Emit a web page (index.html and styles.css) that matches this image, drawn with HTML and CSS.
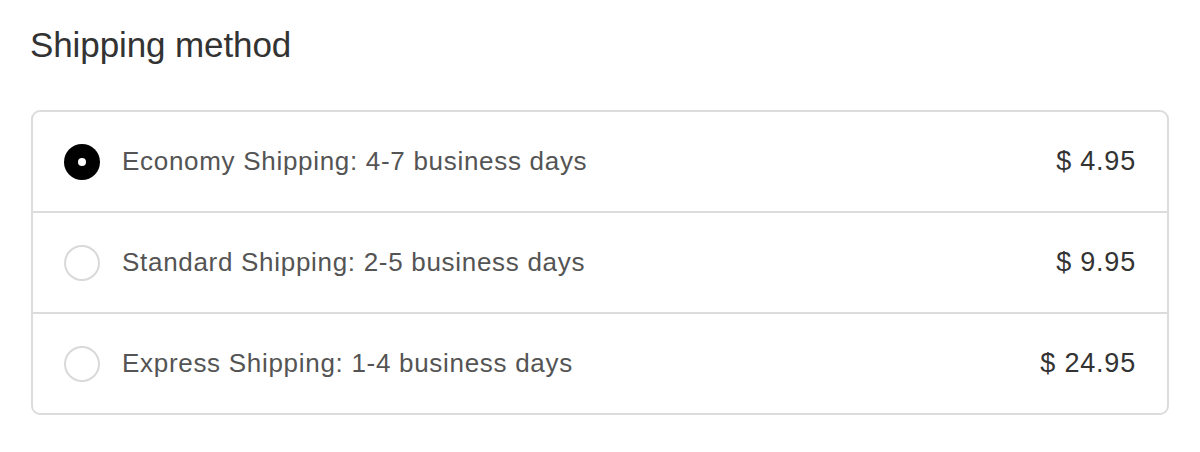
FILE: index.html
```html
<!DOCTYPE html>
<html lang="en">
<head>
  <meta charset="UTF-8" />
  <title>Shipping method</title>
  <link rel="stylesheet" href="styles.css">
</head>
<body>

  <section class="shipping">
    <h2 class="section-title">Shipping method</h2>

    <div class="method-list" role="radiogroup" aria-label="Shipping method">
      <label class="method-row">
        <span class="radio checked"></span>
        <span class="method-name">Economy Shipping: 4-7 business days</span>
        <span class="method-price">$ 4.95</span>
      </label>
      <label class="method-row">
        <span class="radio"></span>
        <span class="method-name">Standard Shipping: 2-5 business days</span>
        <span class="method-price">$ 9.95</span>
      </label>
      <label class="method-row">
        <span class="radio"></span>
        <span class="method-name">Express Shipping: 1-4 business days</span>
        <span class="method-price">$ 24.95</span>
      </label>
    </div>
  </section>

</body>
</html>
```

FILE: styles.css
```css
html, body {
  margin: 0;
  padding: 0;
  background: #fff;
  font-family: "Liberation Sans", Arial, sans-serif;
  color: #333;
}
.shipping {
  padding: 22px 31px 0 30px;
}
.section-title {
  margin: 0 0 42px 0;
  font-size: 35px;
  font-weight: normal;
  line-height: 46px;
  letter-spacing: -0.1px;
  color: #333;
}
.method-list {
  margin-left: 1px;
  border: 2px solid #dcdcdc;
  border-radius: 9px;
}
.method-row {
  display: flex;
  align-items: center;
  height: 99px;
  padding: 0 31px 0 31px;
  border-top: 2px solid #dcdcdc;
}
.method-row:first-child {
  border-top: none;
}
.radio {
  width: 36px;
  height: 36px;
  box-sizing: border-box;
  border: 2px solid #d9d9d9;
  border-radius: 50%;
  flex-shrink: 0;
  margin-right: 22px;
  display: flex;
  align-items: center;
  justify-content: center;
}
.radio.checked {
  border: none;
  background: #000;
}
.radio.checked::after {
  content: "";
  width: 8px;
  height: 8px;
  border-radius: 50%;
  background: #fff;
}
.method-name {
  flex: 1;
  font-size: 26px;
  letter-spacing: 0.7px;
  color: #545454;
}
.method-price {
  font-size: 27px;
  letter-spacing: 0.8px;
  color: #333;
}
```
